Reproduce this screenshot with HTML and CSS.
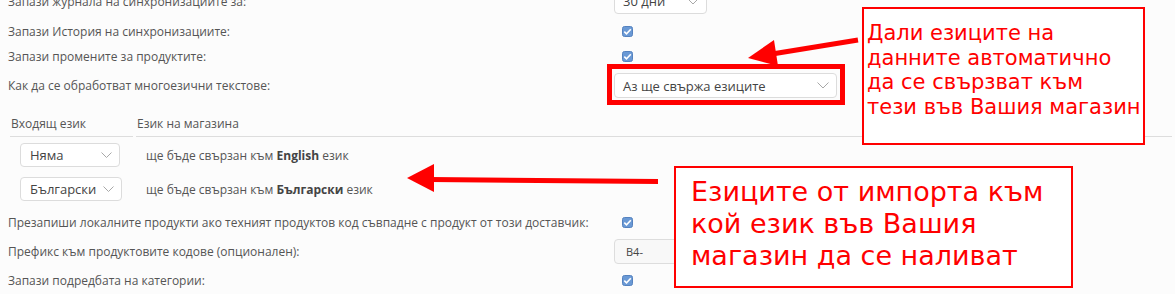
FILE: index.html
```html
<!DOCTYPE html>
<html lang="bg">
<head>
  <meta charset="UTF-8">
  <title>Настройки на синхронизацията</title>
  <link rel="stylesheet" href="styles.css">
</head>
<body>
  <div class="page">
    <div class="settings settings-top">
      <div class="row row-select row-first">
        <label>Запази журнала на синхронизациите за:</label>
        <div class="value">
          <span class="select select-days">30 дни
            <svg class="chev" width="12" height="7" viewBox="0 0 12 7"><path d="M0.5 0.5 L6 6 L11.5 0.5"/></svg>
          </span>
        </div>
      </div>
      <div class="row">
        <label>Запази История на синхронизациите:</label>
        <div class="value">
          <svg class="check" width="11" height="11" viewBox="0 0 11 11"><rect x="0.5" y="0.5" width="10" height="10" rx="2"/><path d="M2.3 5.6 L4.5 7.8 L8.8 3.2"/></svg>
        </div>
      </div>
      <div class="row">
        <label>Запази промените за продуктите:</label>
        <div class="value">
          <svg class="check" width="11" height="11" viewBox="0 0 11 11"><rect x="0.5" y="0.5" width="10" height="10" rx="2"/><path d="M2.3 5.6 L4.5 7.8 L8.8 3.2"/></svg>
        </div>
      </div>
      <div class="row row-select">
        <label>Как да се обработват многоезични текстове:</label>
        <div class="value">
          <span class="highlight">
            <span class="select select-mode">Аз ще свържа езиците
              <svg class="chev" width="12" height="7" viewBox="0 0 12 7"><path d="M0.5 0.5 L6 6 L11.5 0.5"/></svg>
            </span>
          </span>
        </div>
      </div>
    </div>

    <table class="lang-map">
      <thead>
        <tr>
          <th class="col-in">Входящ език</th>
          <th>Език на магазина</th>
        </tr>
      </thead>
      <tbody>
        <tr>
          <td class="col-in">
            <span class="select select-lang">Няма
              <svg class="chev" width="11" height="6" viewBox="0 0 11 6"><path d="M0.5 0.5 L5.5 5.5 L10.5 0.5"/></svg>
            </span>
          </td>
          <td>ще бъде свързан към <b>English</b> език</td>
        </tr>
        <tr>
          <td class="col-in">
            <span class="select select-lang select-wide">Български
              <svg class="chev" width="11" height="6" viewBox="0 0 11 6"><path d="M0.5 0.5 L5.5 5.5 L10.5 0.5"/></svg>
            </span>
          </td>
          <td>ще бъде свързан към <b>Български</b> език</td>
        </tr>
      </tbody>
    </table>

    <div class="settings settings-bottom">
      <div class="row">
        <label>Презапиши локалните продукти ако техният продуктов код съвпадне с продукт от този доставчик:</label>
        <div class="value">
          <svg class="check" width="11" height="11" viewBox="0 0 11 11"><rect x="0.5" y="0.5" width="10" height="10" rx="2"/><path d="M2.3 5.6 L4.5 7.8 L8.8 3.2"/></svg>
        </div>
      </div>
      <div class="row row-select">
        <label>Префикс към продуктовите кодове (опционален):</label>
        <div class="value">
          <span class="text-input">B4-</span>
        </div>
      </div>
      <div class="row">
        <label>Запази подредбата на категории:</label>
        <div class="value">
          <svg class="check" width="11" height="11" viewBox="0 0 11 11"><rect x="0.5" y="0.5" width="10" height="10" rx="2"/><path d="M2.3 5.6 L4.5 7.8 L8.8 3.2"/></svg>
        </div>
      </div>
    </div>

    <svg class="arrows" width="1175" height="294" viewBox="0 0 1175 294">
      <line x1="858" y1="40" x2="772" y2="54" />
      <polygon points="748,58 774,40 778,66" />
      <line x1="658" y1="181.5" x2="430" y2="179.5" />
      <polygon points="407,178 434,164 434,192" />
    </svg>

    <div class="note note-auto">Дали езиците на<br>данните автоматично<br>да се свързват към<br>тези във Вашия магазин</div>
    <div class="note note-map">Езиците от импорта към<br>кой език във Вашия<br>магазин да се наливат</div>
  </div>
</body>
</html>
```

FILE: styles.css
```css
body {
  margin: 0;
  background-color: #fcfcfc;
  overflow: hidden;
  font-family: "Open Sans", "Noto Sans", sans-serif;
  font-size: 12px;
  color: #555;
}
.page {
  position: relative;
  width: 1175px;
  height: 294px;
  overflow: hidden;
}
.settings {
  padding-left: 8px;
}
.settings-top {
  margin-top: -17px;
}
.settings-bottom {
  margin-top: 3px;
}
.row {
  display: grid;
  grid-template-columns: 606px auto;
  align-items: center;
  height: 25px;
}
.row-select {
  height: 33px;
}
.row-first {
  height: 36px;
}
.value {
  display: flex;
  align-items: center;
}
.check {
  margin-left: 8px;
  display: block;
}
.check rect {
  fill: #6a99d5;
  stroke: #5582bf;
}
.check path {
  fill: none;
  stroke: #fff;
  stroke-width: 1.6;
}
.select {
  display: inline-flex;
  align-items: center;
  justify-content: space-between;
  box-sizing: border-box;
  height: 25px;
  padding: 0 7px 0 8px;
  border: 1px solid #dcdcdc;
  border-radius: 4px;
  background-color: #fff;
  font-size: 13px;
  color: #444;
}
.chev path {
  fill: none;
  stroke: #a8a8a8;
  stroke-width: 1;
}
.select-days {
  width: 93px;
}
.select-mode {
  width: 223px;
}
.highlight {
  display: inline-block;
  margin: -9px 0 -7px -7px;
  padding: 4px 3px 2px 2px;
  border: 5px solid #f00;
}
.highlight .select {
  display: flex;
}
.lang-map {
  width: 1168px;
  margin: 6px 0 0 7px;
  border-collapse: separate;
  border-spacing: 3px 2px;
}
.lang-map th {
  height: 26px;
  padding: 0 1px;
  text-align: left;
  font-weight: normal;
  border-bottom: 1px solid #ddd;
}
.lang-map th.col-in {
  width: 121px;
}
.lang-map td {
  height: 32px;
  padding: 0 0 0 10px;
}
.lang-map b {
  color: #444;
  font-weight: 700;
}
.select-lang {
  width: 100px;
  height: 24px;
  padding: 0 7px 0 9px;
}
.select-wide {
  width: 102px;
}
.text-input {
  display: flex;
  align-items: center;
  box-sizing: border-box;
  width: 160px;
  height: 25px;
  padding-left: 11px;
  border: 1px solid #ddd;
  border-radius: 4px;
  background-color: #f8f8f8;
  font-size: 11px;
  color: #444;
}
.arrows {
  position: absolute;
  left: 0;
  top: 0;
  pointer-events: none;
}
.arrows line {
  stroke: #f00;
  stroke-width: 5;
}
.arrows polygon {
  fill: #f00;
}
.note {
  position: absolute;
  box-sizing: border-box;
  border: 2px solid #f00;
  background-color: #fff;
  color: #f00;
  font-family: "DejaVu Sans", sans-serif;
  white-space: nowrap;
}
.note-auto {
  left: 862px;
  top: 7px;
  width: 283px;
  height: 138px;
  padding: 12px 0 0 3px;
  font-size: 21px;
  line-height: 24.5px;
}
.note-map {
  left: 674px;
  top: 166px;
  width: 399px;
  height: 122px;
  padding: 8px 0 0 15px;
  font-size: 27px;
  line-height: 32px;
}
```
